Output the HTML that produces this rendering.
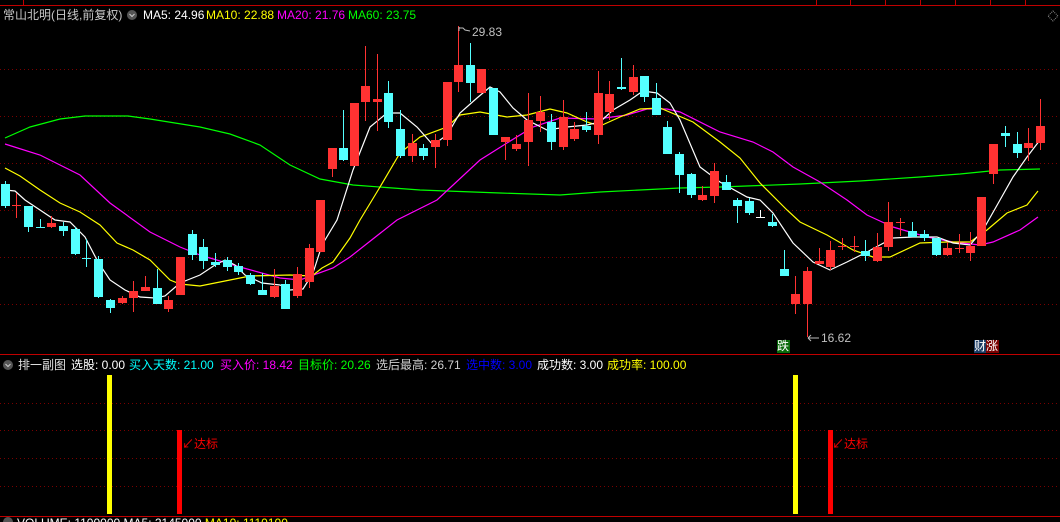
<!DOCTYPE html>
<html><head><meta charset="utf-8"><style>
html,body{margin:0;padding:0;background:#000;width:1060px;height:522px;overflow:hidden}
body{position:relative;font-family:"Liberation Sans","Noto Sans CJK SC",sans-serif;font-size:12px}
.t{position:absolute;white-space:nowrap;line-height:14px}
svg{position:absolute;left:0;top:0}
</style></head><body>
<svg width="1060" height="522" viewBox="0 0 1060 522">
<g shape-rendering="crispEdges">
<line x1="0" y1="5.5" x2="1060" y2="5.5" stroke="#c00000"/>
<path d="M23.5 0V5M816.5 0V5M850.5 0V5M885.5 0V5M920.5 0V5M955.5 0V5M990.5 0V5M1025.5 0V5" stroke="#c00000"/>
<g stroke="#7a0000" stroke-dasharray="1 3">
<path d="M0 69.5H1060M0 116.5H1060M0 163.5H1060M0 210.5H1060M0 257.5H1060M0 304.5H1060"/>
<path d="M0 403.5H1060M0 430.5H1060M0 458.5H1060M0 486.5H1060"/>
</g>
<line x1="0" y1="354.5" x2="1060" y2="354.5" stroke="#c00000"/>
<line x1="0" y1="516.5" x2="1060" y2="516.5" stroke="#c00000"/>
</g>
<g fill="none" stroke-width="1.2">
<polyline stroke="#00ff00" points="5,138 30,127 60,119 85,116 128,116 150,119 200,127 230,134 260,145 290,165 320,179 353,185 420,190 500,193 560,195 600,192 640,190 680,188 720,187 800,184 860,181 920,177 960,174 1000,170 1040,169"/>
<polyline stroke="#ff00ff" points="5,144 40,155 80,175 110,203 150,232 180,247 200,255 240,267 280,278 300,280 333,268 350,257 397,220 437,200 480,160 507,143 533,127 560,118 597,119 627,115 647,109 667,109 680,112 720,132 753,142 773,152 793,167 820,182 847,200 867,215 893,227 927,237 953,242 980,245 993,242 1020,230 1038,217"/>
<polyline stroke="#ffff00" points="5,168 20,176 40,190 60,203 80,212 100,225 117,243 133,250 150,260 170,280 180,284 200,286 230,280 250,276 290,275 312,276 322,268 333,262 350,238 360,220 380,187 400,153 420,137 447,127 460,115 480,112 507,117 527,115 550,109 567,113 587,122 600,126 620,117 640,109 660,108 693,122 720,142 740,158 760,183 787,210 800,222 827,235 853,250 873,257 890,257 920,243 947,242 970,242 987,230 1007,213 1027,205 1038,191"/>
<polyline stroke="#ffffff" points="5,190 15,191 25,200 40,210 55,220 70,222 85,237 98,262 110,280 125,290 140,297 155,298 165,296 180,283 200,275 215,265 225,260 235,265 245,275 262,283 280,285 290,290 303,289 313,273 322,245 337,220 353,170 370,127 387,113 400,113 417,127 433,145 447,135 460,113 477,98 490,87 500,92 513,108 527,120 547,130 567,127 587,125 600,122 613,110 630,100 643,91 657,93 670,103 680,120 700,167 720,182 747,197 760,200 773,213 793,243 813,262 830,270 847,262 867,252 893,238 913,237 937,237 953,243 970,245 983,230 1000,200 1013,177 1027,157 1040,140"/>
</g>
<g shape-rendering="crispEdges">
<path stroke="#54ffff" d="M5.5 181V208M28.5 206V232M40.5 219V228M63.5 222V236M75.5 227V255M86.5 239V267M98.5 256V298M110.5 299V313M157.5 269V304M192.5 230V260M203.5 239V269M215.5 253V267M227.5 257V271M238.5 263V275M250.5 273V285M262.5 273V295M285.5 280V309M343.5 110V161M388.5 81V128M400.5 110V158M423.5 144V160M470.5 43V102M493.5 88V135M551.5 114V150M586.5 112V132M621.5 58V90M644.5 76V102M656.5 83V115M667.5 121V154M679.5 152V193M691.5 173V198M726.5 175V190M737.5 198V223M749.5 198V215M772.5 214V227M784.5 250V276M865.5 240V261M912.5 222V237M924.5 230V241M936.5 238V256M1005.5 126V147M1017.5 132V158"/>
<path stroke="#ff3232" d="M16.5 193V218M51.5 216V228M122.5 296V304M133.5 281V312M145.5 276V291M168.5 296V312M274.5 269V298M297.5 267V298M309.5 244V288M332.5 148V177M365.5 46V121M377.5 54V131M412.5 134V162M435.5 134V168M447.5 82V146M458.5 26V92M505.5 137V160M516.5 135V151M528.5 93V166M540.5 96V132M563.5 100V150M574.5 122V141M598.5 71V144M609.5 81V120M633.5 65V95M702.5 186V201M714.5 163V203M795.5 276V314M807.5 267V337M819.5 248V264M830.5 241V270M842.5 238V250M854.5 236V252M877.5 233V262M888.5 202V251M900.5 218V236M947.5 242V256M959.5 234V253M970.5 232V261M993.5 144V184M1028.5 128V161M1040.5 99V150"/>
<path stroke="#ffffff" d="M760.5 210V217"/>
<g fill="#54ffff">
<rect x="1" y="184" width="9" height="22"/><rect x="24" y="206" width="9" height="21"/><rect x="36" y="227" width="9" height="1"/><rect x="59" y="226" width="9" height="5"/><rect x="71" y="229" width="9" height="25"/><rect x="82" y="258" width="9" height="1"/><rect x="94" y="259" width="9" height="38"/><rect x="106" y="300" width="9" height="8"/><rect x="153" y="288" width="9" height="16"/><rect x="188" y="234" width="9" height="21"/><rect x="199" y="247" width="9" height="14"/><rect x="211" y="262" width="9" height="3"/><rect x="223" y="260" width="9" height="7"/><rect x="234" y="266" width="9" height="6"/><rect x="246" y="275" width="9" height="9"/><rect x="258" y="290" width="9" height="5"/><rect x="281" y="284" width="9" height="25"/><rect x="339" y="148" width="9" height="12"/><rect x="384" y="93" width="9" height="29"/><rect x="396" y="129" width="9" height="27"/><rect x="419" y="148" width="9" height="8"/><rect x="466" y="65" width="9" height="18"/><rect x="489" y="88" width="9" height="47"/><rect x="547" y="122" width="9" height="20"/><rect x="582" y="126" width="9" height="4"/><rect x="617" y="87" width="9" height="2"/><rect x="640" y="76" width="9" height="21"/><rect x="652" y="98" width="9" height="17"/><rect x="663" y="127" width="9" height="27"/><rect x="675" y="154" width="9" height="21"/><rect x="687" y="174" width="9" height="21"/><rect x="722" y="182" width="9" height="8"/><rect x="733" y="200" width="9" height="6"/><rect x="745" y="201" width="9" height="12"/><rect x="768" y="222" width="9" height="4"/><rect x="780" y="269" width="9" height="7"/><rect x="861" y="251" width="9" height="5"/><rect x="908" y="231" width="9" height="6"/><rect x="920" y="234" width="9" height="4"/><rect x="932" y="238" width="9" height="17"/><rect x="1001" y="133" width="9" height="3"/><rect x="1013" y="144" width="9" height="9"/>
</g>
<g fill="#ff3232">
<rect x="12" y="205" width="9" height="1"/><rect x="47" y="223" width="9" height="4"/><rect x="118" y="298" width="9" height="5"/><rect x="129" y="291" width="9" height="7"/><rect x="141" y="287" width="9" height="4"/><rect x="164" y="300" width="9" height="9"/><rect x="176" y="257" width="9" height="38"/><rect x="270" y="286" width="9" height="11"/><rect x="293" y="274" width="9" height="22"/><rect x="305" y="248" width="9" height="34"/><rect x="316" y="200" width="9" height="52"/><rect x="328" y="148" width="9" height="21"/><rect x="350" y="103" width="9" height="63"/><rect x="361" y="86" width="9" height="16"/><rect x="373" y="99" width="9" height="3"/><rect x="408" y="143" width="9" height="13"/><rect x="431" y="140" width="9" height="7"/><rect x="443" y="82" width="9" height="58"/><rect x="454" y="65" width="9" height="17"/><rect x="477" y="69" width="9" height="24"/><rect x="501" y="137" width="9" height="5"/><rect x="512" y="144" width="9" height="5"/><rect x="524" y="120" width="9" height="22"/><rect x="536" y="112" width="9" height="9"/><rect x="559" y="117" width="9" height="30"/><rect x="570" y="129" width="9" height="10"/><rect x="594" y="93" width="9" height="42"/><rect x="605" y="94" width="9" height="18"/><rect x="629" y="77" width="9" height="15"/><rect x="698" y="195" width="9" height="5"/><rect x="710" y="171" width="9" height="25"/><rect x="791" y="294" width="9" height="10"/><rect x="803" y="271" width="9" height="33"/><rect x="815" y="261" width="9" height="3"/><rect x="826" y="250" width="9" height="17"/><rect x="838" y="246" width="9" height="1"/><rect x="850" y="246" width="9" height="1"/><rect x="873" y="247" width="9" height="14"/><rect x="884" y="222" width="9" height="25"/><rect x="896" y="222" width="9" height="1"/><rect x="943" y="248" width="9" height="7"/><rect x="955" y="248" width="9" height="1"/><rect x="966" y="246" width="9" height="7"/><rect x="977" y="197" width="9" height="49"/><rect x="989" y="144" width="9" height="30"/><rect x="1024" y="143" width="9" height="5"/><rect x="1036" y="126" width="9" height="17"/>
</g>
<rect x="756" y="217" width="9" height="1" fill="#fff"/>
<rect x="107" y="375" width="5" height="139" fill="#ffff00"/>
<rect x="177" y="430" width="5" height="84" fill="#ff0000"/>
<rect x="793" y="375" width="5" height="139" fill="#ffff00"/>
<rect x="828" y="430" width="5" height="84" fill="#ff0000"/>
</g>
<path d="M1053 11L1058 16L1053 21L1048 16Z" fill="none" stroke="#888" stroke-dasharray="1 1"/>
<path d="M459 27V31M459 28H463L465 30L470 31" stroke="#bbb" fill="none"/>
<path d="M808 338H819M808 338L811 335M808 338L811 341" stroke="#bbb" fill="none"/>
<circle cx="132" cy="15" r="5" fill="#555"/><path d="M129.5 14L132 16.5L134.5 14" stroke="#ccc" fill="none"/>
<circle cx="8" cy="365" r="5" fill="#555"/><path d="M5.5 364L8 366.5L10.5 364" stroke="#ccc" fill="none"/>
<circle cx="8" cy="522" r="5" fill="#555"/>
</svg>
<div class="t" style="left:3px;top:8px;color:#c8c8c8">常山北明(日线,前复权)</div>
<div class="t" style="left:143px;top:8px;color:#fff">MA5: 24.96</div>
<div class="t" style="left:206px;top:8px;color:#ffff00">MA10: 22.88</div>
<div class="t" style="left:277px;top:8px;color:#ff00ff">MA20: 21.76</div>
<div class="t" style="left:348px;top:8px;color:#00ff00">MA60: 23.75</div>
<div class="t" style="left:472px;top:25px;color:#c0c0c0">29.83</div>
<div class="t" style="left:821px;top:331px;color:#c0c0c0">16.62</div>
<div class="t" style="left:777px;top:340px;width:13px;height:13px;background:#0a6a0a;color:#fff;line-height:13px">跌</div>
<div class="t" style="left:974px;top:340px;width:12px;height:13px;background:#1c3c64;color:#fff;line-height:13px">财</div>
<div class="t" style="left:986px;top:340px;width:13px;height:13px;background:#7a0000;color:#fff;line-height:13px">涨</div>
<div class="t" style="left:18px;top:358px;color:#e0e0e0">排一副图</div>
<div class="t" style="left:71px;top:358px;color:#fff">选股: 0.00</div>
<div class="t" style="left:129px;top:358px;color:#00ffff">买入天数: 21.00</div>
<div class="t" style="left:220px;top:358px;color:#ff00ff">买入价: 18.42</div>
<div class="t" style="left:298px;top:358px;color:#00ff00">目标价: 20.26</div>
<div class="t" style="left:376px;top:358px;color:#d0d0d0">选后最高: 26.71</div>
<div class="t" style="left:466px;top:358px;color:#0000ff">选中数: 3.00</div>
<div class="t" style="left:537px;top:358px;color:#fff">成功数: 3.00</div>
<div class="t" style="left:607px;top:358px;color:#ffff00">成功率: 100.00</div>
<div class="t" style="left:182px;top:437px;color:#ff0000">↙达标</div>
<div class="t" style="left:832px;top:437px;color:#ff0000">↙达标</div>
<div class="t" style="left:17px;top:516px;color:#fff">VOLUME: 1100000 <span>MA5: 2145000</span> <span style="color:#ffff00">MA10: 1110100</span></div>
</body></html>
